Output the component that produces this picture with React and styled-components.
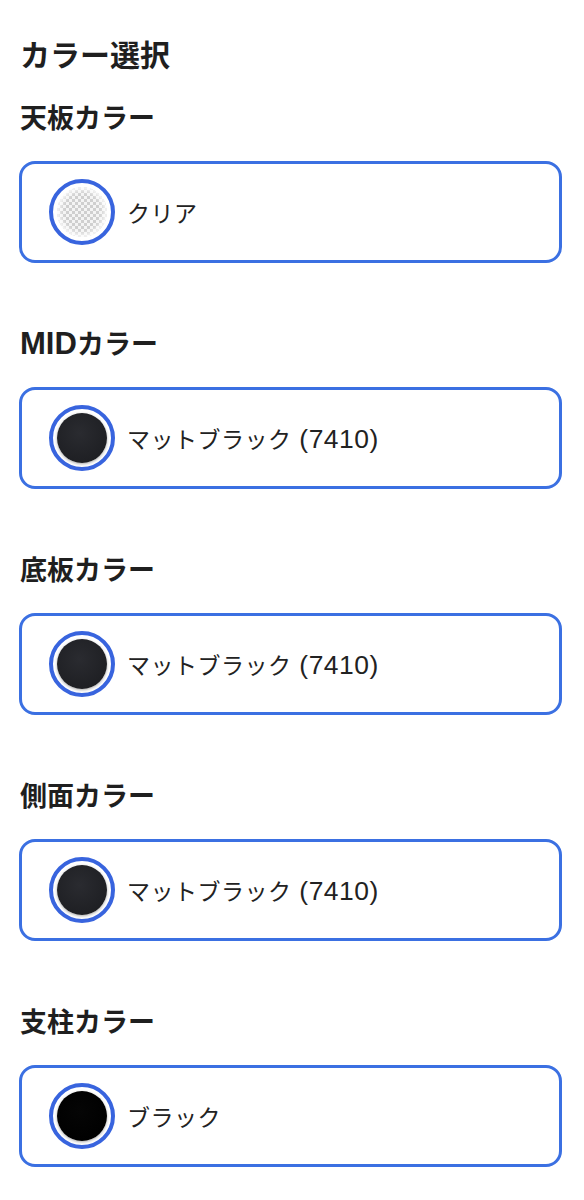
import React from 'react'
import styled, { createGlobalStyle, css } from 'styled-components'

const GlobalStyle = createGlobalStyle`
  body {
    margin: 0;
    background: #fff;
    font-family: "Noto Sans CJK JP", "Noto Sans", sans-serif;
    color: #1f1f1f;
  }
`

const Page = styled.div`
  padding: 33px 22px 30px 19px;
  display: flex;
  flex-direction: column;
`

const Title = styled.h1`
  margin: 0 0 26px;
  font-size: 30px;
  line-height: 40px;
  font-weight: 700;
  padding-left: 1px;
`

const Section = styled.section`
  display: flex;
  flex-direction: column;
  gap: 26px;
  margin-bottom: 62px;
`

const Heading = styled.h2`
  margin: 0;
  font-size: 27px;
  line-height: 36px;
  font-weight: 700;
  padding-left: 1px;
`

// latin runs are set a bit larger, like the system font in the shot
const Latin = styled.span`
  font-family: "Liberation Sans", Arial, sans-serif;
  font-size: 1.15em;
  line-height: 1;
`

const Option = styled.button`
  display: flex;
  align-items: center;
  gap: 12px;
  box-sizing: border-box;
  width: 100%;
  height: 102px;
  padding: 0 27px;
  background: #fff;
  border: solid 3px #3b70e2;
  border-radius: 16px;
  font-family: inherit;
  cursor: pointer;
  text-align: left;
`

const Ring = styled.span`
  display: flex;
  box-sizing: border-box;
  width: 66px;
  height: 66px;
  padding: 4px;
  border: solid 4px #3864de;
  border-radius: 50%;
  background: #fff;
  flex-shrink: 0;
`

const Swatch = styled.span`
  display: block;
  width: 50px;
  height: 50px;
  border-radius: 50%;

  ${({ kind }) =>
    kind === 'clear' &&
    css`
      background-color: #f4f4f4;
      background-image: linear-gradient(45deg, #cfcfcf 25%, transparent 25%),
        linear-gradient(-45deg, #cfcfcf 25%, transparent 25%),
        linear-gradient(45deg, transparent 75%, #cfcfcf 75%),
        linear-gradient(-45deg, transparent 75%, #cfcfcf 75%);
      background-size: 6px 6px;
      background-position: 0 0, 0 3px, 3px -3px, -3px 0;
      box-shadow: inset 0 0 5px 3px rgba(255, 255, 255, 0.85);
    `}

  ${({ kind }) =>
    kind === 'matte' &&
    css`
      background: radial-gradient(circle at 45% 40%, #2a2b30 0%, #1f2024 70%, #16171a 100%);
      box-shadow: 0 1px 3px rgba(0, 0, 0, 0.35);
    `}

  ${({ kind }) =>
    kind === 'black' &&
    css`
      background: radial-gradient(circle at 45% 40%, #050505 0%, #000 75%, #1a1a1a 100%);
      box-shadow: 0 1px 3px rgba(0, 0, 0, 0.35);
    `}
`

const Label = styled.span`
  font-size: 23px;
  font-weight: 400;
  color: #222;
  letter-spacing: 0.5px;
`

const sections = [
  { title: ['', '天板カラー'], label: ['クリア', ''], kind: 'clear' },
  { title: ['MID', 'カラー'], label: ['マットブラック', ' (7410)'], kind: 'matte' },
  { title: ['', '底板カラー'], label: ['マットブラック', ' (7410)'], kind: 'matte' },
  { title: ['', '側面カラー'], label: ['マットブラック', ' (7410)'], kind: 'matte' },
  { title: ['', '支柱カラー'], label: ['ブラック', ''], kind: 'black' },
]

const App = () => {
  return (
    <>
      <GlobalStyle />
      <Page>
        <Title>カラー選択</Title>
        {sections.map((s, i) => (
          <Section key={i}>
            <Heading>
              {s.title[0] && <Latin>{s.title[0]}</Latin>}
              {s.title[1]}
            </Heading>
            <Option type="button">
              <Ring>
                <Swatch kind={s.kind} />
              </Ring>
              <Label>
                {s.label[0]}
                {s.label[1] && <Latin>{s.label[1]}</Latin>}
              </Label>
            </Option>
          </Section>
        ))}
      </Page>
    </>
  )
}

export default App
